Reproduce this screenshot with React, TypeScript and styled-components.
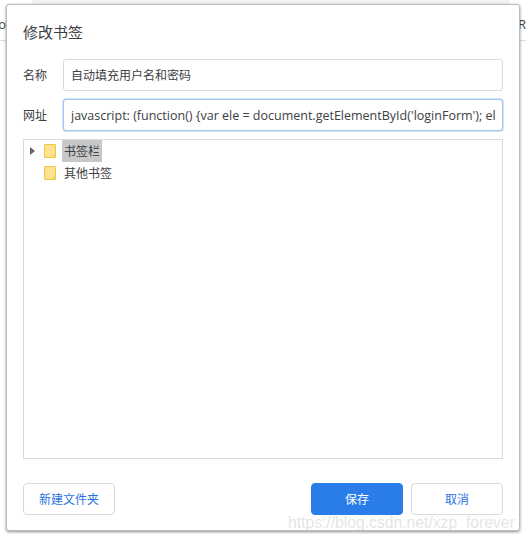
import React from "react";
import styled, { createGlobalStyle } from "styled-components";

const FONT = `"Open Sans", "Noto Sans CJK SC", sans-serif`;

const Global = createGlobalStyle`
  html, body { margin: 0; padding: 0; background: #fff; overflow: hidden; }
  body { font-family: ${FONT}; }
`;

const Page = styled.div`
  position: relative;
  width: 526px;
  height: 540px;
  overflow: hidden;
  background: #fff;
`;

const TabEdge = styled.div`
  height: 4px;
  margin: 0 16px 0 32px;
  background: #f1f3f4;
  border-radius: 0 0 8px 8px;
`;

const BehindBar = styled.div`
  display: flex;
  justify-content: space-between;
  align-items: center;
  height: 32px;
  padding-top: 4px;
  border-bottom: 1px solid #dadce0;
  font-size: 13px;
  color: #444;
`;

const Clipped = styled.span<{ $side: "left" | "right" }>`
  display: block;
  overflow: hidden;
  width: ${(p) => (p.$side === "left" ? "6px" : "8px")};
  direction: ${(p) => (p.$side === "left" ? "rtl" : "ltr")};
  white-space: nowrap;
`;

const Dialog = styled.div`
  position: absolute;
  left: 6px;
  top: 4px;
  width: 514px;
  height: 527px;
  box-sizing: border-box;
  display: flex;
  flex-direction: column;
  padding: 15px 16px;
  background: #fff;
  border: 1px solid #bdbdbd;
  border-radius: 3px;
  box-shadow: 0 1px 3px rgba(0, 0, 0, 0.45);
`;

const Title = styled.h1`
  margin: 0 0 15px;
  height: 24px;
  font-size: 15px;
  font-weight: 400;
  line-height: 24px;
  color: #3c4043;
`;

const Field = styled.label`
  display: flex;
  align-items: center;
  height: 32px;
  margin-bottom: 8px;
`;

const FieldName = styled.span`
  width: 40px;
  font-size: 12px;
  color: #3c4043;
`;

const TextInput = styled.input<{ $focused?: boolean; $size: number }>`
  flex: 1;
  min-width: 0;
  height: 32px;
  box-sizing: border-box;
  padding: 0 7px;
  font-family: ${FONT};
  font-size: ${(p) => p.$size}px;
  color: #3c4043;
  background: #fff;
  outline: none;
  border-radius: 3px;
  border: 1px solid ${(p) => (p.$focused ? "#a6c6f2" : "#dadada")};
  box-shadow: ${(p) => (p.$focused ? "0 0 0 0.5px #a6c6f2" : "none")};
`;

const Tree = styled.div`
  height: 320px;
  box-sizing: border-box;
  border: 1px solid #dadada;
`;

const TreeRow = styled.div`
  display: flex;
  align-items: center;
  height: 22px;
`;

const Arrow = styled.svg`
  width: 5px;
  height: 8px;
  margin-left: 6px;
  flex: none;
`;

const ArrowSlot = styled.span`
  display: flex;
  width: 20px;
  flex: none;
`;

const FolderIcon = styled.svg`
  width: 12px;
  height: 14px;
  flex: none;
  margin-right: 6px;
`;

const TreeLabel = styled.span<{ $selected?: boolean }>`
  height: 22px;
  padding: 0 2px;
  font-size: 12px;
  line-height: 23px;
  color: #3c4043;
  background: ${(p) => (p.$selected ? "#c8c8c8" : "transparent")};
`;

const Footer = styled.div`
  display: flex;
  align-items: center;
  margin-top: 24px;
`;

const Button = styled.button<{ $primary?: boolean }>`
  width: 92px;
  height: 32px;
  box-sizing: border-box;
  padding: 0;
  font-family: ${FONT};
  font-size: 12px;
  border-radius: 4px;
  border: 1px solid ${(p) => (p.$primary ? "#2a7de8" : "#dadada")};
  background: ${(p) => (p.$primary ? "#2a7de8" : "#fff")};
  color: ${(p) => (p.$primary ? "#fff" : "#2a72e0")};
`;

const Spacer = styled.div`
  flex: 1;
`;

const CancelButton = styled(Button)`
  margin-left: 8px;
`;

const Watermark = styled.div`
  position: absolute;
  left: 288px;
  top: 513px;
  font-family: "Liberation Sans", Arial, sans-serif;
  font-size: 15.7px;
  line-height: 20px;
  white-space: nowrap;
  color: rgba(190, 190, 190, 0.42);
`;

const Folder = () => (
  <FolderIcon viewBox="0 0 12 14">
    <path d="M1 .5h10a.5.5 0 0 1 .5.5v12a.5.5 0 0 1-.5.5H1a.5.5 0 0 1-.5-.5V1A.5.5 0 0 1 1 .5z" fill="#fee28f" stroke="#eec643" />
    <path d="M9.5 13.5v-2h2" fill="none" stroke="#eec643" />
  </FolderIcon>
);

export default function App() {
  return (
    <Page>
      <Global />
      <TabEdge />
      <BehindBar>
        <Clipped $side="left">o</Clipped>
        <Clipped $side="right">Re</Clipped>
      </BehindBar>
      <Dialog>
        <Title>修改书签</Title>
        <Field>
          <FieldName>名称</FieldName>
          <TextInput $size={12} readOnly value="自动填充用户名和密码" />
        </Field>
        <Field>
          <FieldName>网址</FieldName>
          <TextInput
            $focused
            $size={12.5}
            readOnly
            value="javascript: (function() {var ele = document.getElementById('loginForm'); ele.submit();})()"
          />
        </Field>
        <Tree>
          <TreeRow>
            <ArrowSlot>
              <Arrow viewBox="0 0 5 8">
                <path d="M0 0l5 4-5 4z" fill="#666" />
              </Arrow>
            </ArrowSlot>
            <Folder />
            <TreeLabel $selected>书签栏</TreeLabel>
          </TreeRow>
          <TreeRow>
            <ArrowSlot />
            <Folder />
            <TreeLabel>其他书签</TreeLabel>
          </TreeRow>
        </Tree>
        <Footer>
          <Button>新建文件夹</Button>
          <Spacer />
          <Button $primary>保存</Button>
          <CancelButton>取消</CancelButton>
        </Footer>
      </Dialog>
      <Watermark>https://blog.csdn.net/xzp_forever</Watermark>
    </Page>
  );
}
